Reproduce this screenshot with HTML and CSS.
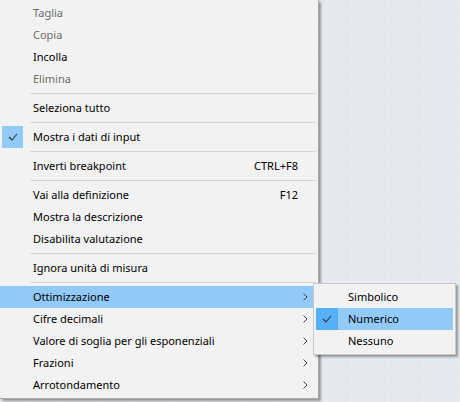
FILE: index.html
```html
<!DOCTYPE html>
<html lang="it">
<head>
<meta charset="utf-8">
<link rel="stylesheet" href="styles.css">
</head>
<body>
<div class="menu main">
  <div class="item disabled"><span class="label">Taglia</span></div>
  <div class="item disabled"><span class="label">Copia</span></div>
  <div class="item"><span class="label">Incolla</span></div>
  <div class="item disabled"><span class="label">Elimina</span></div>
  <div class="sep"></div>
  <div class="item"><span class="label">Seleziona tutto</span></div>
  <div class="sep"></div>
  <div class="item checked"><span class="check"><svg width="10" height="8" viewBox="0 0 10 8"><path d="M1 4 L4 7 L9 1" fill="none" stroke="#333" stroke-width="1.1"/></svg></span><span class="label">Mostra i dati di input</span></div>
  <div class="sep"></div>
  <div class="item"><span class="label">Inverti breakpoint</span><span class="shortcut">CTRL+F8</span></div>
  <div class="sep"></div>
  <div class="item"><span class="label">Vai alla definizione</span><span class="shortcut">F12</span></div>
  <div class="item"><span class="label">Mostra la descrizione</span></div>
  <div class="item"><span class="label">Disabilita valutazione</span></div>
  <div class="sep"></div>
  <div class="item"><span class="label">Ignora unità di misura</span></div>
  <div class="sep"></div>
  <div class="item active"><span class="label">Ottimizzazione</span><span class="arrow"><svg width="5" height="8" viewBox="0 0 5 8"><path d="M0.5 0.5 L4 4 L0.5 7.5" fill="none" stroke="#444" stroke-width="1"/></svg></span></div>
  <div class="item"><span class="label">Cifre decimali</span><span class="arrow"><svg width="5" height="8" viewBox="0 0 5 8"><path d="M0.5 0.5 L4 4 L0.5 7.5" fill="none" stroke="#444" stroke-width="1"/></svg></span></div>
  <div class="item"><span class="label">Valore di soglia per gli esponenziali</span><span class="arrow"><svg width="5" height="8" viewBox="0 0 5 8"><path d="M0.5 0.5 L4 4 L0.5 7.5" fill="none" stroke="#444" stroke-width="1"/></svg></span></div>
  <div class="item"><span class="label">Frazioni</span><span class="arrow"><svg width="5" height="8" viewBox="0 0 5 8"><path d="M0.5 0.5 L4 4 L0.5 7.5" fill="none" stroke="#444" stroke-width="1"/></svg></span></div>
  <div class="item"><span class="label">Arrotondamento</span><span class="arrow"><svg width="5" height="8" viewBox="0 0 5 8"><path d="M0.5 0.5 L4 4 L0.5 7.5" fill="none" stroke="#444" stroke-width="1"/></svg></span></div>
</div>
<div class="menu sub">
  <div class="item"><span class="label">Simbolico</span></div>
  <div class="item active checked"><span class="check dark"><svg width="10" height="8" viewBox="0 0 10 8"><path d="M1 4 L4 7 L9 1" fill="none" stroke="#333" stroke-width="1.1"/></svg></span><span class="label">Numerico</span></div>
  <div class="item"><span class="label">Nessuno</span></div>
</div>
</body>
</html>
```
FILE: styles.css
```css
html, body {
  margin: 0;
  padding: 0;
  width: 460px;
  height: 402px;
  overflow: hidden;
}
body {
  position: relative;
  background-color: #e4e8ef;
  background-image:
    linear-gradient(to right, #eaecef 1px, transparent 1px),
    linear-gradient(to bottom, #eaecef 1px, transparent 1px);
  background-size: 18px 18px;
  background-position: 9px 12px;
  font-family: "Noto Sans", sans-serif;
  font-size: 11px;
  color: #000;
}
.menu {
  position: absolute;
  background: #f2f2f2;
  box-sizing: border-box;
  box-shadow: 2px 2px 2px rgba(0, 0, 0, 0.35);
}
.main {
  left: 0;
  top: 0;
  width: 319px;
  padding: 2px 2px 2px 0;
  border-right: 1px solid #a8a8a8;
  border-bottom: 1px solid #a8a8a8;
}
.sub {
  left: 313px;
  top: 283px;
  width: 143px;
  padding: 2px;
  border: 1px solid #c8c8c8;
}
.item {
  position: relative;
  display: flex;
  align-items: center;
  box-sizing: border-box;
  height: 22px;
  padding: 0 8px 2px 33px;
  white-space: nowrap;
}
.sub .item {
  padding-left: 32px;
}
.item .label {
  flex: 1;
}
.item.disabled {
  color: #6d6d6d;
}
.item.active {
  background: #91c9f7;
}
.shortcut {
  margin-right: 10px;
}
.arrow {
  display: flex;
  padding-top: 2px;
}
.check {
  position: absolute;
  left: 2px;
  top: 0;
  width: 21px;
  height: 22px;
  background: #91c9f7;
  display: flex;
  align-items: center;
  justify-content: center;
}
.sub .check {
  left: 0;
  width: 22px;
}
.check.dark {
  background: #56b0f7;
}
.sep {
  height: 1px;
  margin: 3px 0 3px 30px;
  background: #d7d7d7;
}
```
